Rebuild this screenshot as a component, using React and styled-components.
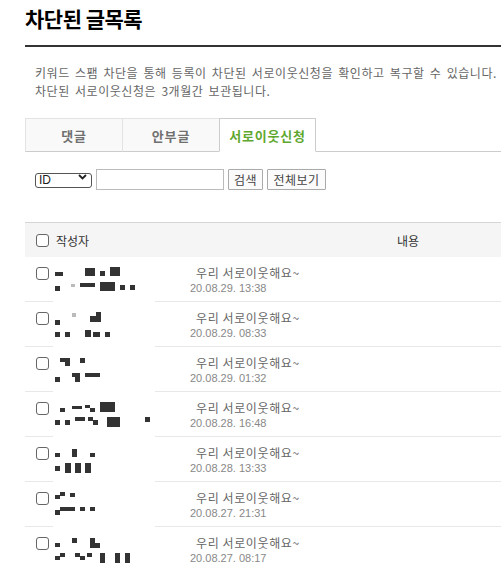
import React from "react";
import styled, { createGlobalStyle } from "styled-components";

const GlobalStyle = createGlobalStyle`
  html, body {
    margin: 0;
    padding: 0;
    background: #fff;
    overflow: hidden;
  }
  body {
    font-family: "Noto Sans CJK KR", "Noto Sans", "Liberation Sans", sans-serif;
    font-size: 12px;
    color: #333;
  }
`;

const Page = styled.div`
  width: 660px;
  padding: 4px 0 0 25px;
`;

const Title = styled.h2`
  margin: 0;
  font-size: 21px;
  line-height: 28px;
  font-weight: 700;
  letter-spacing: -0.5px;
  color: #000;
`;

const Divider = styled.div`
  margin-top: 13px;
  height: 2px;
  background: #333;
`;

const Desc = styled.p`
  margin: 17px 0 0;
  padding-left: 10px;
  font-size: 12px;
  line-height: 18px;
  color: #666;
  letter-spacing: 0.55px;
  word-spacing: 2px;
`;

const Tabs = styled.ul`
  display: flex;
  list-style: none;
  margin: 18px 0 0;
  padding: 0;
  border-bottom: 1px solid #ccc;
`;

const Tab = styled.li`
  box-sizing: border-box;
  width: 97px;
  height: 34px;
  margin-bottom: -1px;
  display: flex;
  align-items: center;
  justify-content: center;
  font-size: 13px;
  font-weight: 700;
  letter-spacing: 0.8px;
  border-top: 1px solid ${(p) => (p.$active ? "#ccc" : "#e3e3e3")};
  border-left: 1px solid ${(p) => (p.$active ? "#ccc" : "#e3e3e3")};
  border-right: ${(p) => (p.$active ? "1px solid #ccc" : "none")};
  border-bottom: 1px solid ${(p) => (p.$active ? "#fff" : "#ccc")};
  background: ${(p) => (p.$active ? "#fff" : "#f9f9f9")};
  color: ${(p) => (p.$active ? "#5fa830" : "#707070")};
`;

const SearchBar = styled.div`
  display: flex;
  align-items: flex-start;
  gap: 4px;
  margin-top: 17px;
  padding-left: 10px;
  height: 21px;
`;

const SelectWrap = styled.div`
  position: relative;
  width: 57px;
  height: 15px;
  margin-top: 1px;
`;

const Select = styled.select`
  appearance: none;
  box-sizing: border-box;
  width: 100%;
  height: 100%;
  margin: 0;
  padding: 0 0 0 3px;
  border: 1px solid #555;
  border-radius: 3px;
  background: #fff;
  font-family: "Liberation Sans", sans-serif;
  font-size: 12px;
  line-height: 13px;
  color: #222;
`;

const Chevron = styled.svg`
  position: absolute;
  right: 5px;
  top: 4px;
  pointer-events: none;
`;

const Input = styled.input`
  box-sizing: border-box;
  width: 128px;
  height: 21px;
  margin: 0;
  border: 1px solid #bbb;
  background: #fff;
`;

const Button = styled.button`
  box-sizing: border-box;
  height: 21px;
  margin: 0;
  padding: 0 2px;
  width: ${(p) => p.$w}px;
  border: 1px solid #aaa;
  border-radius: 1px;
  background: #fbfbfb;
  font-family: "Noto Sans CJK KR", sans-serif;
  font-size: 12px;
  letter-spacing: 0.5px;
  color: #444;
`;

const Table = styled.div`
  width: 611px;
  margin-top: 32px;
  border-top: 1px solid #d5d5d5;
`;

const HeadRow = styled.div`
  display: grid;
  grid-template-columns: 155px 456px;
  height: 34px;
  align-items: center;
  background: #f5f5f5;
  font-size: 12px;
  color: #333;
`;

const HeadName = styled.div`
  display: flex;
  align-items: center;
  gap: 7px;
  padding-left: 11px;
`;

const HeadContent = styled.div`
  text-align: center;
`;

const Check = styled.input.attrs({ type: "checkbox" })`
  appearance: none;
  box-sizing: border-box;
  width: 13px;
  height: 13px;
  margin: 0;
  border: 1px solid #666;
  border-radius: 3px;
  background: #fff;
  flex: none;
`;

const Row = styled.div`
  display: grid;
  grid-template-columns: 155px 456px;
  height: 44px;
  border-bottom: 1px solid #e8e8e8;
`;

const NameCell = styled.div`
  display: flex;
  align-items: flex-start;
  gap: 4px;
  padding: 10px 0 0 11px;
  height: 30px;
`;

const Mosaic = styled.svg`
  display: block;
  margin-top: -4px;
  overflow: visible;
`;

const ContentCell = styled.div`
  padding: 8px 0 0 10px;
`;

const Message = styled.div`
  padding-left: 6px;
  font-size: 12px;
  line-height: 16px;
  letter-spacing: 0.6px;
  color: #666;
`;

const Date = styled.div`
  font-family: "Liberation Sans", sans-serif;
  font-size: 11px;
  line-height: 14px;
  color: #888;
`;

const rows = [
  {
    date: "20.08.29. 13:38",
    blocks: [
      [2, 9, 8, 4], [32, 5, 10, 8], [47, 8, 5, 5], [57, 4, 10, 9],
      [2, 23, 5, 5], [18, 21, 4, 3, "#bbb"], [27, 20, 15, 4], [47, 19, 15, 9],
      [67, 22, 5, 5], [77, 22, 5, 5],
    ],
  },
  {
    date: "20.08.29. 08:33",
    blocks: [
      [2, 12, 5, 5], [19, 5, 4, 4, "#bbb"], [37, 8, 6, 6], [43, 4, 5, 10],
      [2, 24, 5, 5], [12, 24, 5, 5], [32, 22, 6, 7], [40, 24, 7, 5], [52, 24, 5, 5],
    ],
  },
  {
    date: "20.08.29. 01:32",
    blocks: [
      [7, 5, 10, 4], [12, 9, 5, 4], [27, 5, 5, 5],
      [2, 24, 5, 5], [19, 20, 8, 4], [22, 24, 5, 5], [32, 20, 15, 4],
    ],
  },
  {
    date: "20.08.28. 16:48",
    blocks: [
      [7, 10, 5, 4], [19, 8, 10, 3], [32, 7, 5, 3], [37, 10, 5, 4], [47, 4, 15, 10],
      [2, 22, 5, 5], [12, 22, 5, 5], [22, 19, 10, 4], [35, 19, 5, 4], [40, 22, 5, 5],
      [54, 19, 13, 10], [92, 19, 5, 5],
    ],
  },
  {
    date: "20.08.28. 13:33",
    blocks: [
      [2, 10, 5, 4], [19, 6, 5, 8], [37, 10, 5, 4],
      [2, 23, 5, 5], [12, 20, 6, 10], [22, 20, 6, 10], [32, 20, 6, 10],
    ],
  },
  {
    date: "20.08.27. 21:31",
    blocks: [
      [2, 7, 5, 4], [7, 4, 5, 4], [17, 5, 5, 4],
      [2, 22, 5, 5], [7, 19, 15, 4], [27, 19, 5, 4], [37, 19, 5, 4],
    ],
  },
  {
    date: "20.08.27. 08:17",
    blocks: [
      [2, 10, 5, 4], [19, 5, 5, 5], [37, 5, 5, 10], [42, 10, 5, 5],
      [2, 23, 5, 4], [7, 20, 5, 4], [22, 20, 5, 4], [27, 23, 5, 4], [34, 20, 5, 4],
      [47, 20, 5, 10], [62, 20, 5, 10], [72, 20, 5, 10],
    ],
  },
];

const NameMosaic = ({ blocks }) => (
  <Mosaic width="102" height="30" viewBox="0 0 102 30">
    <rect x="0" y="0" width="102" height="41" fill="#fff" />
    {blocks.map(([x, y, w, h, c], i) => (
      <rect key={i} x={x} y={y} width={w} height={h} fill={c || "#333"} />
    ))}
  </Mosaic>
);

export default function App() {
  return (
    <Page>
      <GlobalStyle />
      <Title>차단된 글목록</Title>
      <Divider />
      <Desc>
        키워드 스팸 차단을 통해 등록이 차단된 서로이웃신청을 확인하고 복구할 수 있습니다.
        <br />
        차단된 서로이웃신청은 3개월간 보관됩니다.
      </Desc>

      <Tabs>
        <Tab>댓글</Tab>
        <Tab>안부글</Tab>
        <Tab $active>서로이웃신청</Tab>
      </Tabs>

      <SearchBar>
        <SelectWrap>
          <Select defaultValue="ID">
            <option value="ID">ID</option>
          </Select>
          <Chevron width="9" height="6" viewBox="0 0 9 6">
            <path d="M1 1 L4.5 4.5 L8 1" fill="none" stroke="#222" strokeWidth="1.8" />
          </Chevron>
        </SelectWrap>
        <Input type="text" />
        <Button $w={35}>검색</Button>
        <Button $w={59}>전체보기</Button>
      </SearchBar>

      <Table>
        <HeadRow>
          <HeadName>
            <Check />
            작성자
          </HeadName>
          <HeadContent>내용</HeadContent>
        </HeadRow>
        {rows.map((r) => (
          <Row key={r.date}>
            <NameCell>
              <Check />
              <NameMosaic blocks={r.blocks} />
            </NameCell>
            <ContentCell>
              <Message>우리 서로이웃해요~</Message>
              <Date>{r.date}</Date>
            </ContentCell>
          </Row>
        ))}
      </Table>
    </Page>
  );
}
